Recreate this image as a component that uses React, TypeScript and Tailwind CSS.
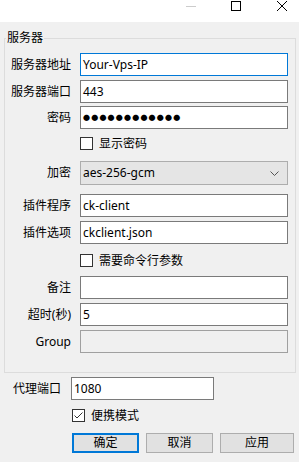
import React from "react";

const font = "font-['Noto_Sans','Noto_Sans_CJK_SC',sans-serif]";

function Label({ children, w = "w-[66px]" }: { children: React.ReactNode; w?: string }) {
  return <div className={`${w} shrink-0 text-right leading-[16px]`}>{children}</div>;
}

function TextBox({ value, focused, disabled }: { value?: string; focused?: boolean; disabled?: boolean }) {
  const border = focused ? "border-[#0078d7]" : disabled ? "border-[#a0a0a0]" : "border-[#7a7a7a]";
  const bg = disabled ? "bg-[#f0f0f0]" : "bg-white";
  return (
    <div className={`ml-[9px] w-[208px] h-[23px] border ${border} ${bg} flex items-center pl-[2px] leading-[16px] text-black`}>
      {value}
    </div>
  );
}

function CheckBox({ checked, label }: { checked?: boolean; label: string }) {
  return (
    <div className="flex items-center h-[13px]">
      <div className="w-[13px] h-[13px] border border-[#333] bg-white flex items-center justify-center">
        {checked && (
          <svg width="11" height="11" viewBox="0 0 11 11">
            <path d="M1.5 5.5 L4 8 L9.5 2.5" fill="none" stroke="#333" strokeWidth="1" />
          </svg>
        )}
      </div>
      <span className="ml-[6px] leading-[16px]">{label}</span>
    </div>
  );
}

export default function App() {
  return (
    <div className={`w-[299px] h-[462px] bg-[#f0f0f0] text-[12px] text-black ${font} overflow-hidden`}>
      {/* title bar */}
      <div className="h-[22px] bg-white relative">
        <svg className="absolute left-[186px] top-[6px]" width="10" height="1" viewBox="0 0 10 1">
          <rect x="0" y="0" width="10" height="1" fill="#cccccc" />
        </svg>
        <svg className="absolute left-[231px] top-[1px]" width="10" height="10" viewBox="0 0 10 10">
          <rect x="0.5" y="0.5" width="9" height="9" fill="none" stroke="#000" strokeWidth="1" />
        </svg>
        <svg className="absolute left-[277px] top-[1px]" width="10" height="10" viewBox="0 0 10 10">
          <path d="M0 0 L10 10 M10 0 L0 10" stroke="#000" strokeWidth="1" />
        </svg>
      </div>

      <fieldset className="mt-[8px] ml-[4px] w-[292px] h-[343px] border border-[#dcdcdc] p-0">
        <legend className="px-[1px] ml-[1px] leading-[16px]">服务器</legend>
        <div className="pt-[7px] pr-[7px] flex flex-col">
          <div className="flex items-center">
            <Label>服务器地址</Label>
            <TextBox value="Your-Vps-IP" focused />
          </div>
          <div className="flex items-center mt-[4px]">
            <Label>服务器端口</Label>
            <TextBox value="443" />
          </div>
          <div className="flex items-center mt-[3px]">
            <Label>密码</Label>
            <div className="ml-[9px] w-[208px] h-[23px] border border-[#7a7a7a] bg-white flex items-center pl-[2px]">
              <span className="text-[7px] tracking-[1.2px] leading-[16px]">●●●●●●●●●●●●</span>
            </div>
          </div>
          <div className="mt-[8px] ml-[75px]">
            <CheckBox label="显示密码" />
          </div>
          <div className="flex items-center mt-[11px]">
            <Label>加密</Label>
            <div className="ml-[9px] w-[208px] h-[24px] border border-[#adadad] bg-[#e5e5e5] flex items-center pl-[2px] pr-[8px] justify-between">
              <span className="leading-[16px]">aes-256-gcm</span>
              <svg width="9" height="5" viewBox="0 0 9 5">
                <path d="M0.5 0.5 L4.5 4.5 L8.5 0.5" fill="none" stroke="#555" strokeWidth="1" />
              </svg>
            </div>
          </div>
          <div className="flex items-center mt-[9px]">
            <Label>插件程序</Label>
            <TextBox value="ck-client" />
          </div>
          <div className="flex items-center mt-[4px]">
            <Label>插件选项</Label>
            <TextBox value="ckclient.json" />
          </div>
          <div className="mt-[10px] ml-[75px]">
            <CheckBox label="需要命令行参数" />
          </div>
          <div className="flex items-center mt-[9px]">
            <Label>备注</Label>
            <TextBox />
          </div>
          <div className="flex items-center mt-[4px]">
            <Label>超时(秒)</Label>
            <TextBox value="5" />
          </div>
          <div className="flex items-center mt-[4px]">
            <Label>Group</Label>
            <TextBox disabled />
          </div>
        </div>
      </fieldset>

      <div className="flex items-center mt-[4px]">
        <div className="w-[61px] text-right leading-[16px]">代理端口</div>
        <div className="ml-[10px] w-[143px] h-[23px] border border-[#7a7a7a] bg-white flex items-center pl-[2px] leading-[16px]">1080</div>
      </div>
      <div className="mt-[9px] ml-[72px]">
        <CheckBox checked label="便携模式" />
      </div>
      <div className="mt-[11px] ml-[72px] flex">
        <div className="w-[67px] h-[20px] border-2 border-[#0078d7] bg-[#e1e1e1] flex items-center justify-center leading-[16px]">确定</div>
        <div className="ml-[7px] w-[67px] h-[20px] border border-[#adadad] bg-[#e1e1e1] flex items-center justify-center leading-[16px]">取消</div>
        <div className="ml-[7px] w-[74px] h-[20px] border border-[#adadad] bg-[#e1e1e1] flex items-center justify-center leading-[16px]">应用</div>
      </div>
    </div>
  );
}
